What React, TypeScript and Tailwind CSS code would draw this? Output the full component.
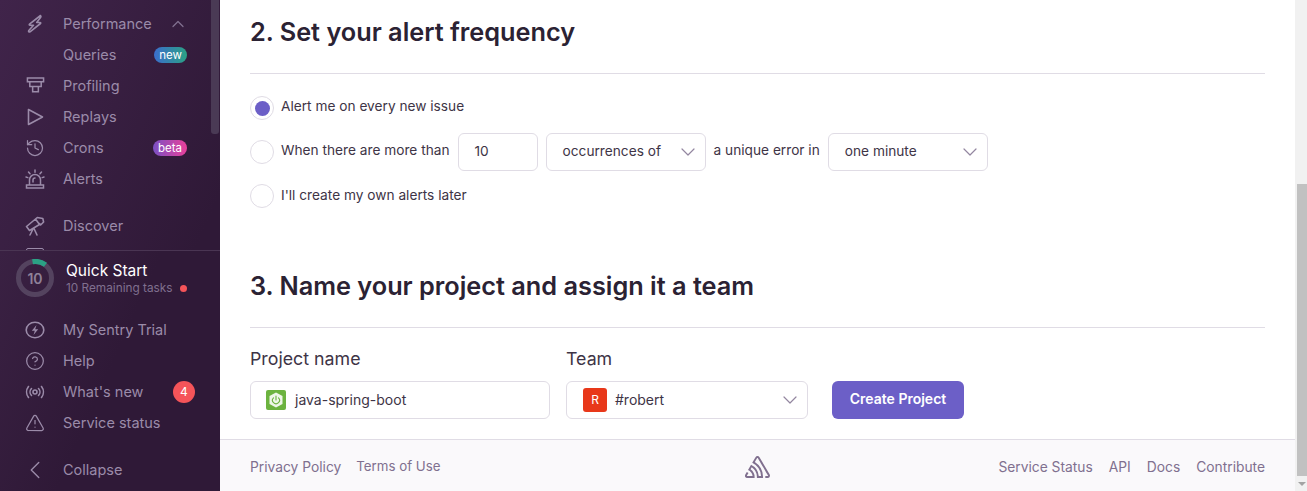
import { ChevronDown, ChevronUp, ChevronLeft, History, CircleHelp, TriangleAlert } from "lucide-react";
import type { ReactNode } from "react";

const font = "font-['Inter','Roboto',sans-serif]";

function Zap() {
  return (
    <svg viewBox="0 0 20 20" className="size-5" fill="none" stroke="currentColor" strokeWidth="1.6" strokeLinejoin="round">
      <path d="M15.500 1.500 4.500 10.200c-.5.400-.2 1 .4 1h3.600L3.800 16.500c-.7.900.2 1.900 1.200 1.300l10.500-8.300c.5-.4.2-1-.4-1h-3.400l4-5.300c.7-1-.2-1.500-.2-1.700Z" />
    </svg>
  );
}

function Profiling() {
  return (
    <svg viewBox="0 0 20 20" className="size-[19px]" fill="none" stroke="currentColor" strokeWidth="1.6">
      <path d="M1.500 2h17v4h-17zM4 6v5h12V6M7 11v5.500h6V11" />
    </svg>
  );
}

function Replay() {
  return (
    <svg viewBox="0 0 20 20" className="size-5" fill="none" stroke="currentColor" strokeWidth="1.6" strokeLinejoin="round">
      <path d="M3.500 2.500v15L17.500 10z" />
    </svg>
  );
}

function Siren() {
  return (
    <svg viewBox="0 0 20 20" className="size-5" fill="none" stroke="currentColor" strokeWidth="1.5" strokeLinecap="round">
      <path d="M1.500 16h17v3h-17zM4.500 16v-5a5.500 5.500 0 0 1 11 0v5M10 9a2 2 0 0 0-2 2v2M10 1v2.200M3.500 3l1.500 1.800M16.500 3 15 4.800M1 8l1.800.6M19 8l-1.800.6" />
    </svg>
  );
}

function Telescope() {
  return (
    <svg viewBox="0 0 20 20" className="size-5" fill="none" stroke="currentColor" strokeWidth="1.6" strokeLinejoin="round" strokeLinecap="round">
      <path d="m1.500 10.500 9-7.500 4 5.500-10 6zM10.500 3l1.800-1.500 5.500 1 .8 3.500-3 3-1.100-1.500M8 13l-3 6M9 12.500l3 6.500" />
    </svg>
  );
}

function TrialBolt() {
  return (
    <svg viewBox="0 0 20 20" className="size-5" fill="none" stroke="currentColor" strokeWidth="1.6">
      <ellipse cx="10" cy="10" rx="8.800" ry="7.800" />
      <path d="M11.500 5 6.800 10.800h3L8.500 15l4.700-5.800h-3z" fill="currentColor" stroke="none" />
    </svg>
  );
}

function Broadcast() {
  return (
    <svg viewBox="0 0 20 20" className="size-5" fill="none" stroke="currentColor" strokeWidth="1.6" strokeLinecap="round">
      <circle cx="10" cy="10" r="2" />
      <path d="M6.500 6.500a5 5 0 0 0 0 7M13.500 6.500a5 5 0 0 1 0 7M3.500 4.500a9 9 0 0 0 0 11M16.500 4.500a9 9 0 0 1 0 11" />
    </svg>
  );
}

function NavItem({ icon, label, badge }: { icon?: ReactNode; label: string; badge?: ReactNode }) {
  return (
    <div className="flex h-[31px] items-center pl-[25px] pr-[33px] text-[#9b8ba9]">
      <span className="flex w-[20px] justify-center">{icon}</span>
      <span className="ml-[18px] flex-1 text-[14.500px]">{label}</span>
      {badge}
    </div>
  );
}

function SelectBox({ label, className }: { label: string; className: string }) {
  return (
    <div className={`flex h-[38px] items-center justify-between rounded-[6px] border border-[#e0dce5] bg-white pl-4 pr-[5px] text-[13.700px] text-[#3e3446] ${className}`}>
      <span className="pb-[2px]">{label}</span>
      <ChevronDown className="size-6 text-[#9386a0]" strokeWidth={1.200} />
    </div>
  );
}

function Radio({ checked }: { checked?: boolean }) {
  return (
    <span className="flex size-6 shrink-0 items-center justify-center rounded-full border border-[#e0dce5] bg-white">
      {checked && <span className="size-[15px] rounded-full bg-[#6c5fc7]" />}
    </span>
  );
}

function Sidebar() {
  return (
    <aside className="relative flex h-full w-[220px] shrink-0 flex-col bg-[linear-gradient(294deg,#2f1937_30%,#40244a_100%)]">
      <div className="h-[250px] shrink-0 overflow-hidden pt-[8px]">
        <NavItem icon={<Zap />} label="Performance" badge={<ChevronUp className="-mr-[1px] size-5 text-[#80708f]" strokeWidth={1.500} />} />
        <NavItem label="Queries" badge={
          <span className="rounded-full bg-[linear-gradient(90deg,#3b6ecc,#2ba185)] px-[5px] text-[11.500px] leading-[16px] text-white">new</span>
        } />
        <NavItem icon={<Profiling />} label="Profiling" />
        <NavItem icon={<Replay />} label="Replays" />
        <NavItem icon={<History className="size-[22px]" strokeWidth={1.500} />} label="Crons" badge={
          <span className="rounded-full bg-[linear-gradient(90deg,#7a50c4,#e9409a)] px-[5px] text-[11.500px] leading-[16px] text-white">beta</span>
        } />
        <NavItem icon={<Siren />} label="Alerts" />
        <div className="h-[16px]" />
        <NavItem icon={<Telescope />} label="Discover" />
        <div className="ml-[26px] mt-[7px] h-4 w-[18px] rounded-[2px] border border-[#9b8ba9]" />
      </div>

      <div className="flex flex-1 flex-col border-t border-[#4a3553] bg-[linear-gradient(294deg,#2f1937_50%,#3a2143_100%)]">
        <div className="flex items-center pl-4 pt-[8px]">
          <div className="relative flex size-[38px] items-center justify-center rounded-full border-[5px] border-[#54435f] text-[14px] font-semibold text-[#8f8199]">
            10
            <svg viewBox="0 0 38 38" className="absolute -inset-[5px] size-[38px]" fill="none">
              <path d="M16.500 2.700a16.500 16.500 0 0 1 13 3.100" stroke="#2ba185" strokeWidth="5" />
            </svg>
          </div>
          <div className="ml-3">
            <div className="text-[15.500px] leading-[20px] text-white">Quick Start</div>
            <div className="flex items-center text-[11.800px] leading-[14px] text-[#80708f]">
              10 Remaining tasks
              <span className="ml-[7px] size-[7px] rounded-full bg-[#f55459]" />
            </div>
          </div>
        </div>
        <div className="mt-[17px]">
          <NavItem icon={<TrialBolt />} label="My Sentry Trial" />
          <NavItem icon={<CircleHelp className="size-[22px]" strokeWidth={1.500} />} label="Help" />
          <NavItem icon={<Broadcast />} label="What's new" badge={
            <span className="-mr-[8px] flex size-[22px] items-center justify-center rounded-full bg-[#f55459] text-[12px] text-white">4</span>
          } />
          <NavItem icon={<TriangleAlert className="size-[22px]" strokeWidth={1.500} />} label="Service status" />
        </div>
        <div className="mt-[16px]">
          <NavItem icon={<ChevronLeft className="size-[30px] shrink-0" strokeWidth={1.100} />} label="Collapse" />
        </div>
      </div>

      <div className="absolute right-[1px] top-0 h-[134px] w-[8px] rounded-b-[3px] bg-[#4a3a55]" />
    </aside>
  );
}

function SpringLogo() {
  return (
    <span className="flex size-5 items-center justify-center rounded-[2px] bg-[#6cb33f]">
      <svg viewBox="0 0 20 20" className="size-5" fill="none">
        <path d="M10 2.500 16.500 6v8L10 17.500 3.500 14V6z" fill="#eef6e8" />
        <path d="M7.500 7.800a3.500 3.500 0 1 0 5 0M10 6v4" stroke="#6cb33f" strokeWidth="1.100" strokeLinecap="round" />
      </svg>
    </span>
  );
}

function SentryLogo() {
  return (
    <svg viewBox="0 0 50 44" className="h-[22px] w-[25px] text-[#80708f]" fill="currentColor">
      <path d="M29,2.260a4.670,4.670,0,0,0-8,0L14.420,13.530A32.210,32.210,0,0,1,32.170,40.190H27.550A27.680,27.680,0,0,0,12.090,17.470L6,28a15.920,15.920,0,0,1,9.230,12.170H4.620A.76.76,0,0,1,4,39.060l2.940-5a10.740,10.740,0,0,0-3.360-1.900l-2.910,5a4.540,4.540,0,0,0,1.690,6.240A4.660,4.660,0,0,0,4.620,44H19.150a19.400,19.400,0,0,0-8-17.310l2.310-4a23.870,23.870,0,0,1,10.300,21.300h12.310a35.880,35.880,0,0,0-16.410-31.800l4.670-8a.77.77,0,0,1,1.050-.27c.53.290,20.290,34.770,20.660,35.170a.76.76,0,0,1-.68,1.130H40.600q.09,1.910,0,3.810h4.780A4.590,4.590,0,0,0,50,39.430a4.490,4.490,0,0,0-.62-2.280Z" />
    </svg>
  );
}

function Main() {
  return (
    <main className="flex h-full min-w-0 flex-1 flex-col bg-white">
      <div className="flex-1 px-[30px] pt-[14px]">
        <h2 className="text-[25.300px] font-semibold leading-[36px] text-[#2b2233]">2. Set your alert frequency</h2>
        <div className="mt-[23px] border-t border-[#e0dce5]" />

        <div className="mt-[22px] flex items-center gap-[7px] text-[13.700px] text-[#3e3446]">
          <Radio checked />
          <span className="-mt-[4px]">Alert me on every new issue</span>
        </div>
        <div className="mt-[13px] flex items-center text-[13.700px] text-[#3e3446]">
          <Radio />
          <span className="ml-[7px] -mt-[4px]">When there are more than</span>
          <div className="ml-[8px] flex h-[38px] w-[80px] items-center rounded-[6px] border border-[#e0dce5] pl-4 pb-[2px]">10</div>
          <SelectBox label="occurrences of" className="ml-[8px] w-[160px]" />
          <span className="ml-[8px] -mt-[4px]">a unique error in</span>
          <SelectBox label="one minute" className="ml-[8px] w-[160px]" />
        </div>
        <div className="mt-[13px] flex items-center gap-[7px] text-[13.700px] text-[#3e3446]">
          <Radio />
          <span className="-mt-[2px]">I'll create my own alerts later</span>
        </div>

        <h2 className="mt-[60px] text-[25.300px] font-semibold leading-[36px] text-[#2b2233]">3. Name your project and assign it a team</h2>
        <div className="mt-[23px] border-t border-[#e0dce5]" />

        <div className="mt-[19px] flex items-end">
          <div className="w-[300px]">
            <div className="text-[17.800px] leading-[24px] text-[#3e3446]">Project name</div>
            <div className="mt-[10px] flex h-[38px] items-center gap-[9px] rounded-[6px] border border-[#e0dce5] pl-[15px] text-[14px] text-[#3e3446]">
              <SpringLogo />
              <span className="pb-[2px]">java-spring-boot</span>
            </div>
          </div>
          <div className="ml-[16px] w-[242px]">
            <div className="text-[17.800px] leading-[24px] text-[#3e3446]">Team</div>
            <div className="mt-[10px] flex h-[38px] items-center justify-between rounded-[6px] border border-[#e0dce5] pl-[16px] pr-[5px] text-[14px] text-[#3e3446]">
              <span className="flex items-center gap-[8px]">
                <span className="flex size-6 items-center justify-center rounded-[3px] bg-[#e8381a] text-[12px] text-white">R</span>
                <span className="pb-[2px]">#robert</span>
              </span>
              <ChevronDown className="size-6 text-[#9386a0]" strokeWidth={1.200} />
            </div>
          </div>
          <button type="button" className="ml-[24px] h-[38px] w-[132px] rounded-[6px] bg-[#6c5fc7] pb-[3px] text-[14px] font-semibold text-white">
            Create Project
          </button>
        </div>
      </div>

      <footer className="flex h-[52px] shrink-0 items-center justify-between border-t border-[#e0dce5] bg-[#faf9fb] px-[30px] pt-[3px] text-[13.800px] text-[#80708f]">
        <div className="flex w-[300px] gap-[15px]">
          <span>Privacy Policy</span>
          <span className="text-[13.300px]">Terms of Use</span>
        </div>
        <SentryLogo />
        <div className="flex w-[300px] justify-end gap-4">
          <span>Service Status</span>
          <span>API</span>
          <span>Docs</span>
          <span>Contribute</span>
        </div>
      </footer>
    </main>
  );
}

export default function App() {
  return (
    <div className={`flex h-[491px] w-[1307px] overflow-hidden ${font}`}>
      <Sidebar />
      <Main />
      <div className="flex h-full w-[12px] shrink-0 flex-col bg-[#f1f1f1]">
        <div className="h-[184px] shrink-0" />
        <div className="ml-[2px] flex-1 bg-[#c1c1c1]" />
        <div className="flex h-[15px] shrink-0 items-center justify-center text-[#a3a3a3]">
          <span className="ml-[2px] h-0 w-0 border-x-[4px] border-t-[4px] border-x-transparent border-t-current" />
        </div>
      </div>
    </div>
  );
}
